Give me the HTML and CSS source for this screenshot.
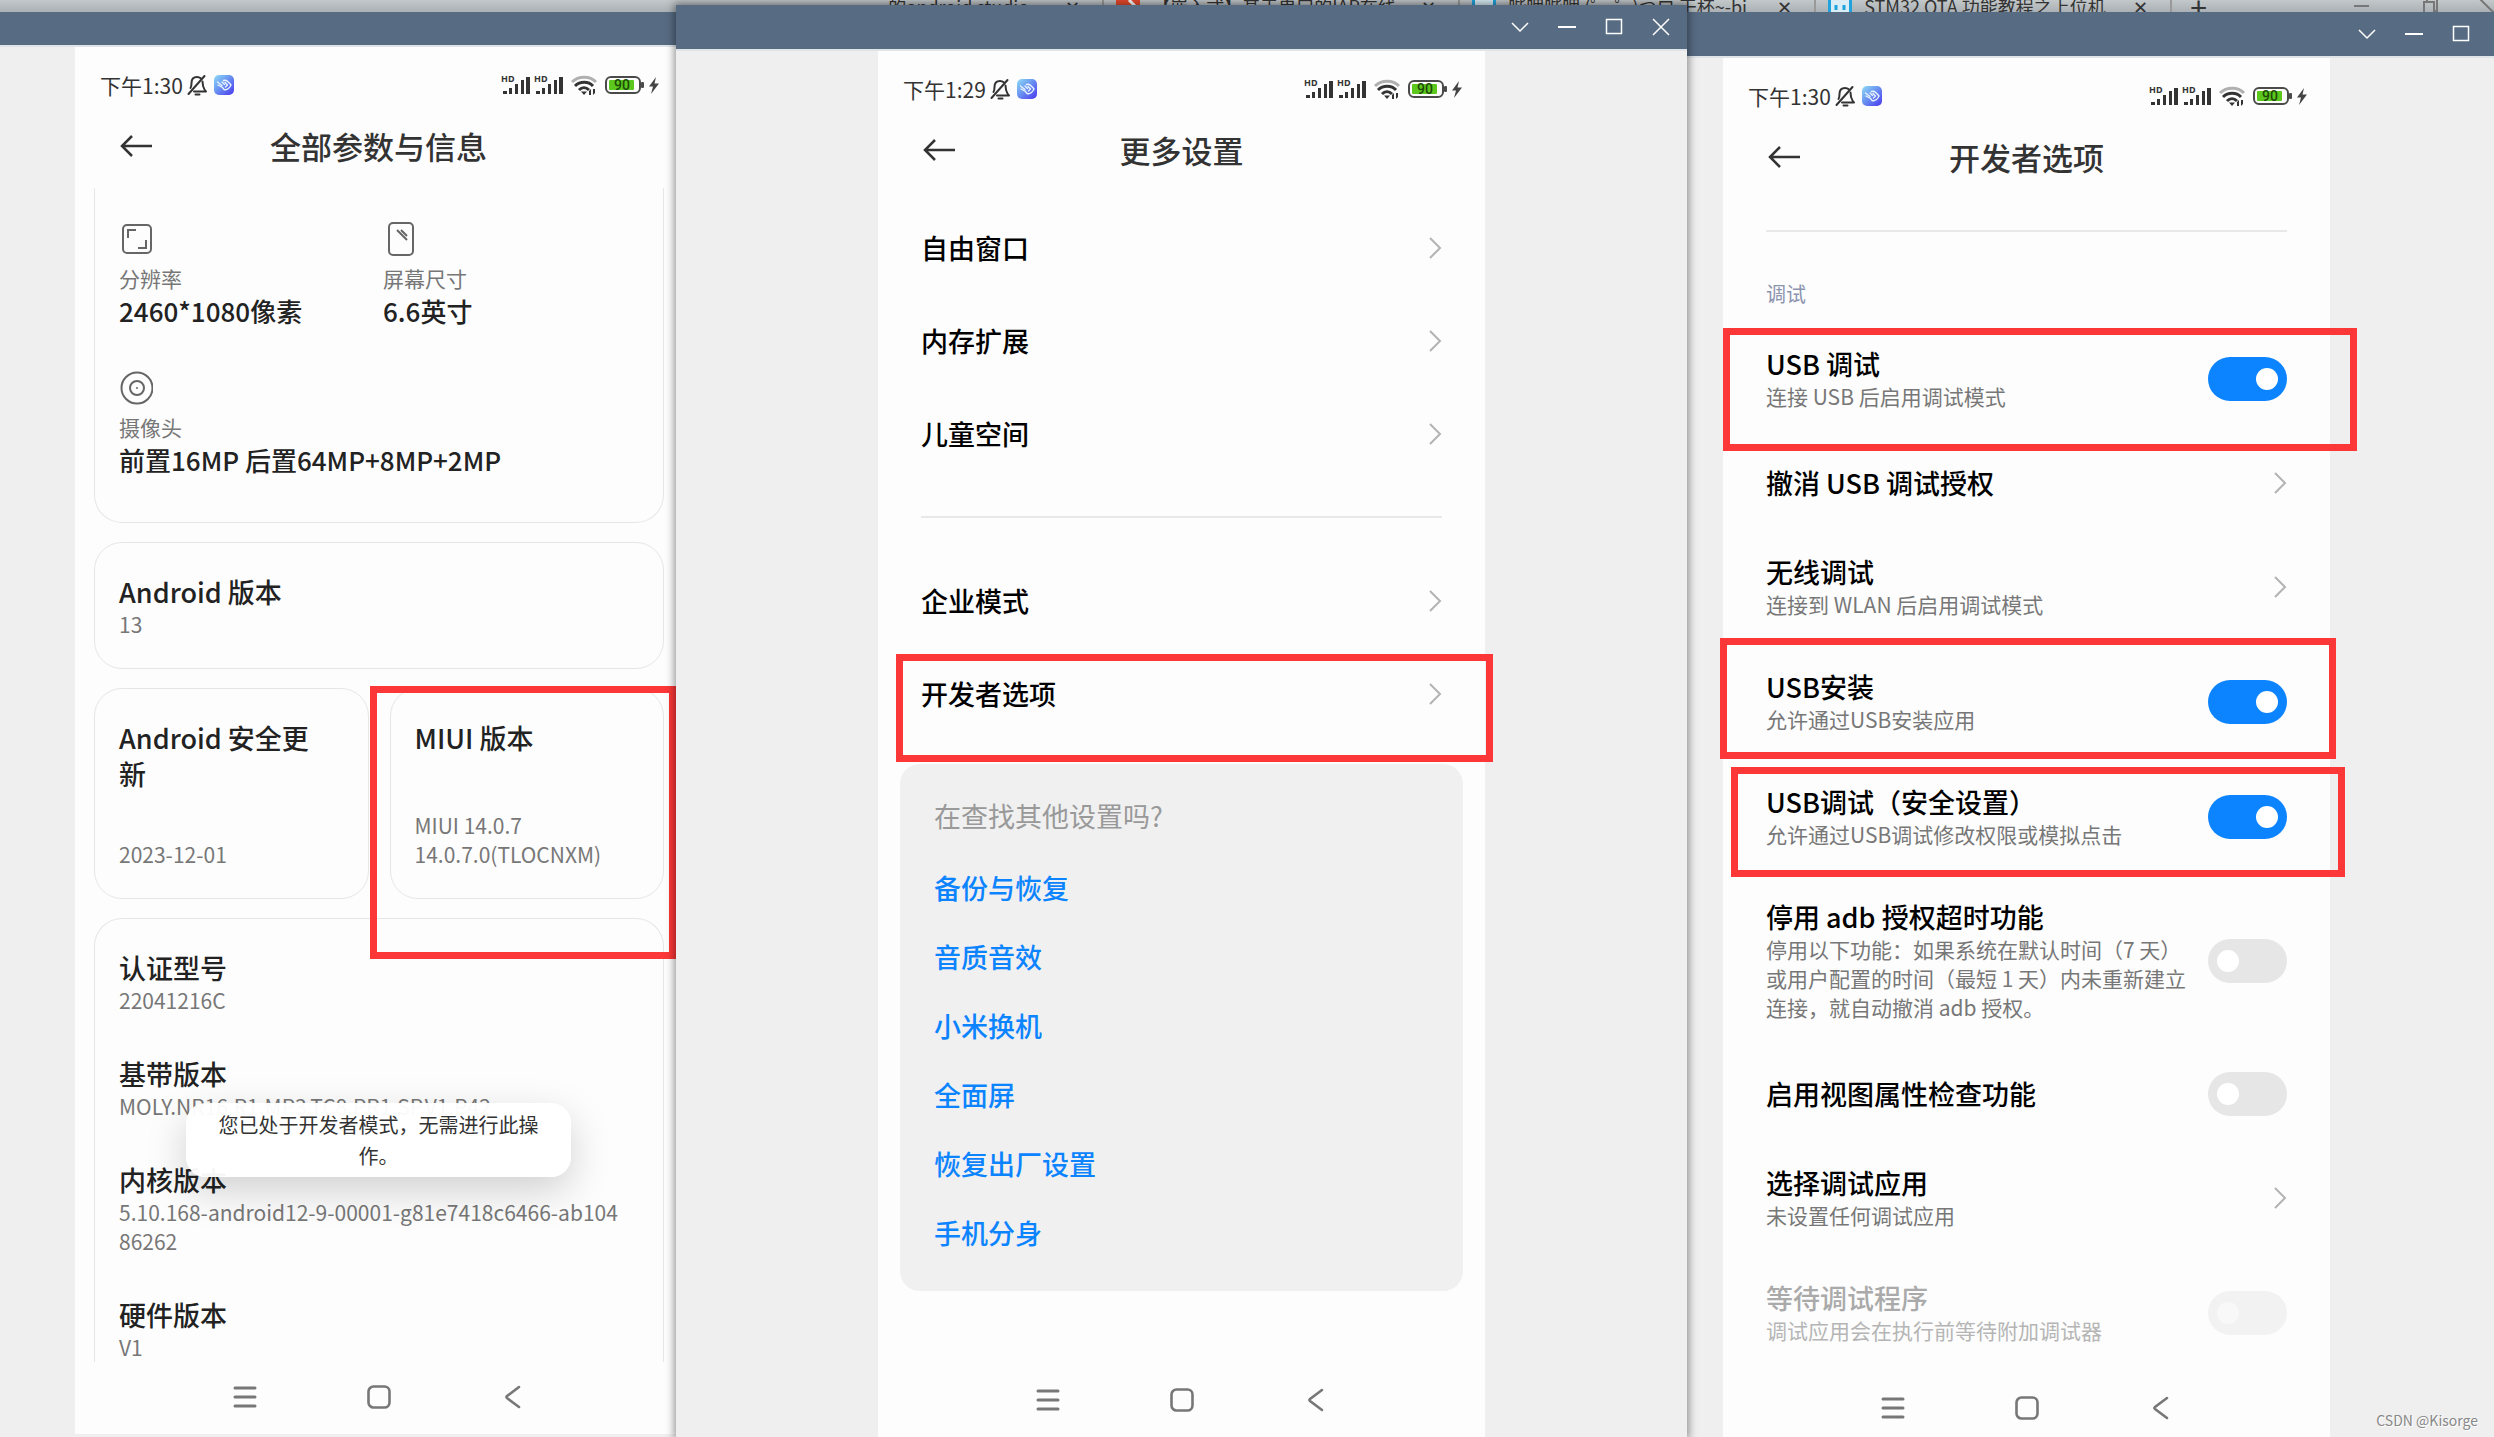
FILE: index.html
```html
<!DOCTYPE html>
<html lang="zh-CN">
<head>
<meta charset="utf-8">
<meta name="viewport" content="width=device-width, initial-scale=1">
<title>开发者选项</title>
<link rel="stylesheet" href="styles.css">
</head>
<body>
<svg class="defs" width="0" height="0" aria-hidden="true">
  <defs>
    <linearGradient id="app-fill" x1="0" y1="0" x2="1" y2="1">
      <stop offset="0" stop-color="#8fdcf5"/><stop offset=".4" stop-color="#6d9cf2"/><stop offset="1" stop-color="#4a38ee"/>
    </linearGradient>
  </defs>
  <symbol id="bell-off" viewBox="0 0 22 22">
    <g fill="none" stroke="#333" stroke-width="2" stroke-linecap="round" stroke-linejoin="round">
      <path d="M4.500 14C5.500 12.500 5.500 11 5.500 9C5.500 5 8 3 11 3C12.500 3 13.800 3.500 14.700 4.300M16.500 7.500C16.600 11 16.800 13 18.500 15.500L20 17.500H8"/>
      <path d="M18.500 2L2.500 20M9.500 20.500H13.500"/>
    </g>
  </symbol>
  <symbol id="app" viewBox="0 0 20 20">
    <rect width="20" height="20" rx="5" fill="url(#app-fill)"/>
    <path d="M3.500 7L8 10.500M4 10L8.500 12.500M8 7L10.500 9.500M9.500 5.500C13 4.500 14.500 7 17 10C15.500 13 13.500 15.500 10 14.500L8.500 12.500M11 7.500L13.500 10L11.500 12" fill="none" stroke="#e8f4ff" stroke-width="1.400" stroke-linecap="round"/>
  </symbol>
  <symbol id="signals" viewBox="0 0 160 22">
    <g fill="#333">
      <text class="hd" x="1" y="8">HD</text><text class="hd" x="34" y="8">HD</text>
      <path d="M3 17h4v3h-4zM9 14h3v6h-3zM15 10h3v10h-3zM21 6h3v14h-3zM26 3h4v17h-4z"/>
      <path d="M36 17h4v3h-4zM42 14h3v6h-3zM48 10h3v10h-3zM54 6h3v14h-3zM59 3h4v17h-4z"/>
    </g>
    <g fill="none" stroke-width="3">
      <path d="M72 8C78.500 1.500 90 1.500 96 8" stroke="#b0b0b0"/>
      <path d="M75 12C80 7 88.500 7 93 12M79 16C82 13 86 13 89 16" stroke="#333"/>
    </g>
    <path d="M81 17.500L84 21L87 17.500ZM89 17l2-2v6h-2zM93 15h2v4l-2 2z" fill="#333"/>
    <rect x="106" y="3" width="34" height="16" rx="5" fill="#fff" stroke="#4a4a4a" stroke-width="2"/>
    <rect x="109" y="6" width="25" height="10" rx="1" fill="#5cc81e"/>
    <rect x="141" y="8" width="3" height="6" rx="1" fill="#4a4a4a"/>
    <text class="charge" x="114" y="16">90</text>
    <path d="M156 3L149 12.500H153L151 20L159 9.500H154.500Z" fill="#444"/>
  </symbol>
  <symbol id="back" viewBox="0 0 34 24"><path d="M13 2L3 12L13 22M3 12H33" fill="none" stroke="#333" stroke-width="2.500"/></symbol>
  <symbol id="chevron" viewBox="0 0 14 24"><path d="M2 2L12 12L2 22" fill="none" stroke="#b3b3b3" stroke-width="2"/></symbol>
  <symbol id="nav-menu" viewBox="0 0 24 24"><path d="M2 3H22M2 12H22M2 21H22" stroke="#777" stroke-width="3" stroke-linecap="round"/></symbol>
  <symbol id="nav-home" viewBox="0 0 24 24"><rect x="1.500" y="1.500" width="21" height="21" rx="5" fill="none" stroke="#777" stroke-width="2.600"/></symbol>
  <symbol id="nav-back" viewBox="0 0 24 24"><path d="M18 2L6 11Q4.800 12 6 13L18 22" fill="none" stroke="#777" stroke-width="2.600" stroke-linecap="round"/></symbol>
  <symbol id="w-down" viewBox="0 0 18 18"><path d="M1 5L9 13L17 5" fill="none" stroke="#fff" stroke-width="1.500"/></symbol>
  <symbol id="w-min" viewBox="0 0 18 18"><path d="M0 9H18" stroke="#fff" stroke-width="2"/></symbol>
  <symbol id="w-max" viewBox="0 0 18 18"><rect x="1.500" y="1.500" width="15" height="14" fill="none" stroke="#fff" stroke-width="1.500"/></symbol>
  <symbol id="w-close" viewBox="0 0 18 18"><path d="M1 1L17 17M17 1L1 17" stroke="#fff" stroke-width="1.500"/></symbol>
  <symbol id="bili" viewBox="0 0 24 24"><rect x="1.500" y="1.500" width="21" height="21" rx="5" fill="#d9edf6" stroke="#1fa3dc" stroke-width="3"/><path d="M8 11v5M16 11v5" stroke="#1fa3dc" stroke-width="3"/></symbol>
</svg>

<nav class="tabstrip" aria-label="浏览器标签">
  <span class="tab tab-end"><span class="tab-title">的android studio</span><span class="tab-x">✕</span></span>
  <span class="tab"><svg class="tab-icon" viewBox="0 0 24 24"><rect width="24" height="24" rx="3" fill="#e8492d"/><path d="M6 20Q8 12 18 12M13 6L19 12L13 18" fill="none" stroke="#fff" stroke-width="3"/></svg><span class="tab-title">【嵌入式】基于串口的IAP在线</span><span class="tab-x">✕</span></span>
  <span class="tab"><svg class="tab-icon"><use href="#bili"/></svg><span class="tab-title">哔哩哔哩 (゜-゜)つロ 干杯~-bi</span><span class="tab-x">✕</span></span>
  <span class="tab"><svg class="tab-icon"><use href="#bili"/></svg><span class="tab-title">STM32 OTA 功能教程之上位机</span><span class="tab-x">✕</span></span>
  <span class="tab-add">+</span>
  <svg class="tab-controls" viewBox="0 0 140 16"><path d="M0 8H15M126 1L140 15" stroke="#777" stroke-width="2"/><path d="M70 4h10v11h-10zM73 4v-3h10v12h-3" fill="none" stroke="#777" stroke-width="2"/></svg>
</nav>

<main class="desktop">
  <section class="window window-info">
    <div class="titlebar"></div>
    <div class="phone">
      <div class="status"><span>下午1:30</span><svg class="bell"><use href="#bell-off"/></svg><svg class="app"><use href="#app"/></svg><svg class="signals"><use href="#signals"/></svg></div>
      <header class="header"><button class="icon-button" aria-label="返回"><svg class="back"><use href="#back"/></svg></button><h1>全部参数与信息</h1></header>
      <div class="cards">
        <div class="card card-top">
          <div class="spec">
            <svg class="spec-icon" viewBox="0 0 34 34" fill="none" stroke="#666" stroke-width="2"><rect x="4" y="3" width="28" height="28" rx="4"/><path d="M9 16V8H17M27 18V26H19"/></svg>
            <span class="sub">分辨率</span><span class="value">2460*1080像素</span>
          </div>
          <div class="spec">
            <svg class="spec-icon" viewBox="0 0 34 34" fill="none" stroke="#666" stroke-width="2"><rect x="6" y="1" width="24" height="32" rx="4"/><path d="M14 8L24 18M18 8L24 14"/></svg>
            <span class="sub">屏幕尺寸</span><span class="value">6.6英寸</span>
          </div>
          <div class="spec spec-wide">
            <svg class="spec-icon" viewBox="0 0 34 34" fill="none" stroke="#666" stroke-width="2"><circle cx="18" cy="17" r="15.500"/><circle cx="18" cy="17" r="7"/><circle cx="18" cy="17" r="1" fill="#666" stroke="none"/></svg>
            <span class="sub">摄像头</span><span class="value">前置16MP 后置64MP+8MP+2MP</span>
          </div>
        </div>
        <div class="card"><h2>Android 版本</h2><p class="sub">13</p></div>
        <div class="pair">
          <div class="card card-tall"><h2>Android 安全更<br>新</h2><p class="sub">2023-12-01</p></div>
          <div class="card card-tall marked mark-miui"><h2>MIUI 版本</h2><p class="sub">MIUI 14.0.7<br>14.0.7.0(TLOCNXM)</p></div>
        </div>
        <div class="card card-bottom">
          <div><h2>认证型号</h2><p class="sub">22041216C</p></div>
          <div><h2>基带版本</h2><p class="sub">MOLY.NR16.R1.MP3.TC8.PR1.SP.V1.P42</p></div>
          <div><h2>内核版本</h2><p class="sub">5.10.168-android12-9-00001-g81e7418c6466-ab104<br>86262</p></div>
          <div><h2>硬件版本</h2><p class="sub">V1</p></div>
        </div>
      </div>
      <div class="toast" role="status">您已处于开发者模式，无需进行此操作。</div>
      <div class="navbar"><button class="icon-button" aria-label="最近任务"><svg><use href="#nav-menu"/></svg></button><button class="icon-button" aria-label="主页"><svg><use href="#nav-home"/></svg></button><button class="icon-button" aria-label="后退"><svg><use href="#nav-back"/></svg></button></div>
    </div>
  </section>

  <section class="window window-more">
    <div class="titlebar"><button aria-label="更多"><svg><use href="#w-down"/></svg></button><button aria-label="最小化"><svg><use href="#w-min"/></svg></button><button aria-label="最大化"><svg><use href="#w-max"/></svg></button><button aria-label="关闭"><svg><use href="#w-close"/></svg></button></div>
    <div class="phone">
      <div class="status"><span>下午1:29</span><svg class="bell"><use href="#bell-off"/></svg><svg class="app"><use href="#app"/></svg><svg class="signals"><use href="#signals"/></svg></div>
      <header class="header"><button class="icon-button" aria-label="返回"><svg class="back"><use href="#back"/></svg></button><h1>更多设置</h1></header>
      <div class="list list-more">
        <a class="row" href="#"><span class="name">自由窗口</span><svg class="chevron"><use href="#chevron"/></svg></a>
        <a class="row" href="#"><span class="name">内存扩展</span><svg class="chevron"><use href="#chevron"/></svg></a>
        <a class="row" href="#"><span class="name">儿童空间</span><svg class="chevron"><use href="#chevron"/></svg></a>
        <hr>
        <a class="row" href="#"><span class="name">企业模式</span><svg class="chevron"><use href="#chevron"/></svg></a>
        <a class="row marked mark-dev" href="#"><span class="name">开发者选项</span><svg class="chevron"><use href="#chevron"/></svg></a>
      </div>
      <div class="suggest">
        <p>在查找其他设置吗?</p>
        <a href="#">备份与恢复</a>
        <a href="#">音质音效</a>
        <a href="#">小米换机</a>
        <a href="#">全面屏</a>
        <a href="#">恢复出厂设置</a>
        <a href="#">手机分身</a>
      </div>
      <div class="navbar"><button class="icon-button" aria-label="最近任务"><svg><use href="#nav-menu"/></svg></button><button class="icon-button" aria-label="主页"><svg><use href="#nav-home"/></svg></button><button class="icon-button" aria-label="后退"><svg><use href="#nav-back"/></svg></button></div>
    </div>
  </section>

  <section class="window window-dev">
    <div class="titlebar"><button aria-label="更多"><svg><use href="#w-down"/></svg></button><button aria-label="最小化"><svg><use href="#w-min"/></svg></button><button aria-label="最大化"><svg><use href="#w-max"/></svg></button></div>
    <div class="phone">
      <div class="status"><span>下午1:30</span><svg class="bell"><use href="#bell-off"/></svg><svg class="app"><use href="#app"/></svg><svg class="signals"><use href="#signals"/></svg></div>
      <header class="header"><button class="icon-button" aria-label="返回"><svg class="back"><use href="#back"/></svg></button><h1>开发者选项</h1></header>
      <div class="list list-dev">
        <hr>
        <h2 class="group">调试</h2>
        <label class="row marked mark-debug"><span class="text"><span class="name">USB 调试</span><span class="sub">连接 USB 后启用调试模式</span></span><input class="switch" type="checkbox" checked></label>
        <a class="row" href="#"><span class="name">撤消 USB 调试授权</span><svg class="chevron"><use href="#chevron"/></svg></a>
        <a class="row" href="#"><span class="text"><span class="name">无线调试</span><span class="sub">连接到 WLAN 后启用调试模式</span></span><svg class="chevron"><use href="#chevron"/></svg></a>
        <label class="row marked mark-install"><span class="text"><span class="name">USB安装</span><span class="sub">允许通过USB安装应用</span></span><input class="switch" type="checkbox" checked></label>
        <label class="row marked mark-secure"><span class="text"><span class="name">USB调试（安全设置）</span><span class="sub">允许通过USB调试修改权限或模拟点击</span></span><input class="switch" type="checkbox" checked></label>
        <label class="row"><span class="text"><span class="name">停用 adb 授权超时功能</span><span class="sub">停用以下功能：如果系统在默认时间（7 天）<br>或用户配置的时间（最短 1 天）内未重新建立<br>连接，就自动撤消 adb 授权。</span></span><input class="switch" type="checkbox"></label>
        <label class="row"><span class="name">启用视图属性检查功能</span><input class="switch" type="checkbox"></label>
        <a class="row" href="#"><span class="text"><span class="name">选择调试应用</span><span class="sub">未设置任何调试应用</span></span><svg class="chevron"><use href="#chevron"/></svg></a>
        <label class="row row-disabled"><span class="text"><span class="name">等待调试程序</span><span class="sub">调试应用会在执行前等待附加调试器</span></span><input class="switch" type="checkbox" disabled></label>
      </div>
      <div class="navbar"><button class="icon-button" aria-label="最近任务"><svg><use href="#nav-menu"/></svg></button><button class="icon-button" aria-label="主页"><svg><use href="#nav-home"/></svg></button><button class="icon-button" aria-label="后退"><svg><use href="#nav-back"/></svg></button></div>
    </div>
  </section>
</main>
<div class="watermark">CSDN @Kisorge</div>
</body>
</html>
```
FILE: styles.css
```css
* { box-sizing: border-box; }

body {
  margin: 0;
  background: #b5babd;
  color: #222;
  font-family: "Noto Sans CJK SC", sans-serif;
  overflow-x: hidden;
}

h1, h2, p { margin: 0; }
a { color: inherit; text-decoration: none; }
button { border: 0; padding: 0; background: none; }
svg { display: block; flex: none; }
.defs { position: absolute; }
.hd { font: bold 9px "Noto Sans", sans-serif; }
.charge { font: 500 14px Roboto, sans-serif; fill: #1c4a08; }

/* browser tabs showing behind the windows */
.tabstrip {
  position: absolute;
  top: 0;
  left: 0;
  right: 0;
  height: 12px;
  display: flex;
  align-items: center;
  padding-left: 30%;
  overflow: hidden;
  background: linear-gradient(#c3c8ca, #aab0b4);
  font-size: 18px;
  line-height: 12px;
  white-space: nowrap;
  color: #333;
}
.tab {
  flex: none;
  width: 356px;
  display: flex;
  align-items: center;
  gap: 12px;
  padding: 0 22px 0 12px;
  border-right: 2px solid #999;
}
.tab-end { justify-content: flex-end; }
.tab-icon { width: 24px; height: 24px; }
.tab-x { margin-left: auto; }
.tab-end .tab-x { margin-left: 24px; }
.tab-add { margin-left: 18px; font-size: 30px; }
.tab-controls { width: 140px; height: 16px; margin-left: auto; }

.desktop {
  display: grid;
  grid-template-columns: 676fr 1011fr 807fr;
  min-height: 100vh;
}
.window {
  display: flex;
  flex-direction: column;
  background: #efefef;
}
.window-info { margin: 1px -209px 0 0; padding-bottom: 3px; }
.window-more { z-index: 2; margin-top: 5px; align-items: center; box-shadow: 0 0 8px 2px rgba(0, 0, 0, .4); }
.window-dev { z-index: 1; margin-top: 12px; }
.window-info .phone { margin-left: 75px; }
.window-dev .phone { margin-left: 36px; }

.titlebar {
  align-self: stretch;
  height: 46px;
  display: flex;
  justify-content: flex-end;
  align-items: center;
  padding-right: 3px;
  background: #576b83;
  border-bottom: 2px solid #dfe4e9;
}
.window-dev .titlebar { padding-right: 10px; }
.titlebar button { width: 47px; height: 44px; display: grid; place-items: center; }
.titlebar svg { width: 18px; height: 18px; }

.phone {
  position: relative;
  flex: 1;
  width: 100%;
  max-width: 607px;
  display: flex;
  flex-direction: column;
  background: #fdfdfd;
}
.status {
  height: 57px;
  display: flex;
  align-items: center;
  padding: 18px 22px 0 25px;
  font-size: 21px;
  color: #333;
}
.bell { width: 22px; height: 22px; margin-left: 3px; }
.app { width: 20px; height: 20px; margin-left: 6px; }
.signals { width: 160px; height: 22px; margin-left: auto; }

.header {
  height: 84px;
  display: grid;
  grid-template-columns: 34px 1fr 34px;
  align-items: center;
  padding: 0 44px;
}
.header h1 { font-size: 31px; line-height: 40px; font-weight: 500; text-align: center; color: #333; }
.back { width: 34px; height: 24px; }

.navbar {
  margin-top: auto;
  display: flex;
  justify-content: center;
  gap: 110px;
  padding: 20px 0 25px;
}
.navbar svg { width: 24px; height: 24px; }
.window-dev .navbar { padding-bottom: 17px; }

h2, .name { font-size: 27px; line-height: 36px; font-weight: 500; }
.sub { font-size: 21px; line-height: 29px; color: #777; white-space: nowrap; }

/* device information cards */
.cards { display: flex; flex-direction: column; gap: 19px; padding: 0 18px 0 19px; }
.card {
  padding: 31px 24px 29px;
  border: 1px solid #e6e6e6;
  border-radius: 28px;
}
.card-top {
  display: grid;
  grid-template-columns: 1fr 1fr;
  gap: 42px 8px;
  padding: 34px 24px 44px;
  border-top: 0;
  border-radius: 0 0 28px 28px;
}
.spec { display: flex; flex-direction: column; }
.spec-wide { grid-column: 1 / 3; }
.spec-icon { width: 34px; height: 34px; margin-bottom: 8px; }
.value { font-size: 26px; line-height: 36px; font-weight: 500; }
.pair { display: grid; grid-template-columns: 1fr 1fr; gap: 21px; }
.card-tall { min-height: 211px; display: flex; flex-direction: column; justify-content: space-between; }
.card-bottom {
  display: flex;
  flex-direction: column;
  gap: 41px;
  padding-bottom: 0;
  border-bottom: 0;
  border-radius: 28px 28px 0 0;
}
.toast {
  position: absolute;
  left: 111px;
  right: 111px;
  bottom: 257px;
  padding: 6px 28px;
  border-radius: 20px;
  background: rgba(255, 255, 255, .96);
  box-shadow: 0 14px 40px rgba(0, 0, 0, .18);
  font-size: 20px;
  line-height: 31px;
  text-align: center;
  color: #333;
}

/* settings lists */
.list { padding: 0 43px; color: #000; }
.list hr { height: 2px; margin: 0; border: 0; background: #e8e8e8; }
.row {
  min-height: 93px;
  display: flex;
  align-items: center;
  justify-content: space-between;
}
.row:has(.text) { padding: 25px 0; }
.text { display: flex; flex-direction: column; }
.chevron { width: 14px; height: 24px; }
.list-more { padding-top: 9px; }
.list-more hr { margin: 36px 0; }
.list-dev { padding-top: 31px; }
.list-dev .group {
  margin: 47px 0 13px;
  font-size: 20px;
  line-height: 29px;
  font-weight: 400;
  color: #8b93ad;
}
.row-disabled .name { color: #aaa; }
.row-disabled .sub { color: #b5b5b5; }

.switch {
  appearance: none;
  flex: none;
  width: 79px;
  height: 44px;
  margin: 0;
  padding: 11px 9px;
  border-radius: 22px;
  background: #e6e6e6;
}
.switch::before {
  content: "";
  display: block;
  width: 22px;
  height: 22px;
  border-radius: 50%;
  background: #fff;
}
.switch:checked { background: #0d84ff; }
.switch:checked::before { margin-left: auto; }
.switch:disabled { background: #f2f2f2; }
.switch:disabled::before { background: #f8f8f8; }

.suggest {
  display: flex;
  flex-direction: column;
  gap: 33px;
  margin: 24px 22px 0;
  padding: 34px 34px 40px;
  border-radius: 20px;
  background: #f0f0f0;
  font-size: 27px;
  line-height: 36px;
}
.suggest p { margin-bottom: 3px; color: #999; }
.suggest a { color: #0d84ff; font-weight: 500; }

/* red annotation frames */
.marked { position: relative; z-index: 1; }
.marked::after {
  content: "";
  position: absolute;
  border: 7px solid #fc3737;
  pointer-events: none;
}
.mark-miui::after { inset: -3px -13px -61px -21px; }
.mark-dev::after { inset: 7px -51px -22px -25px; }
.mark-debug::after { inset: 7px -70px -15px -43px; }
.mark-install::after { inset: -6px -49px 0 -46px; }
.mark-secure::after { inset: 8px -58px -3px -35px; }

.watermark {
  position: absolute;
  z-index: 3;
  right: 16px;
  bottom: 8px;
  font: 14px/18px "Noto Sans CJK SC", sans-serif;
  color: #888;
  text-shadow: 1px 1px 0 #fff;
}
```
